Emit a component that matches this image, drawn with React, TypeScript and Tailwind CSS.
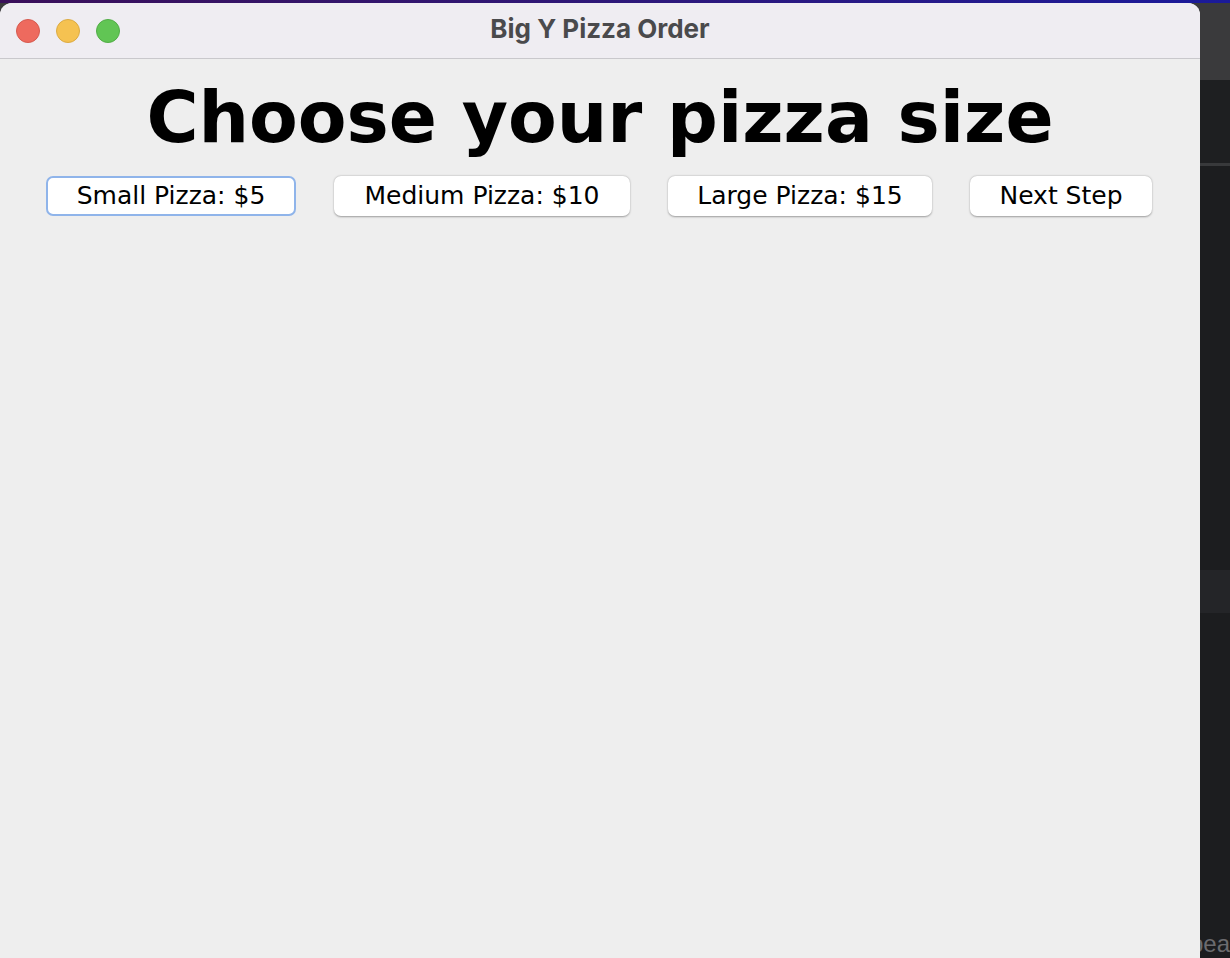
import React from "react";

export default function App() {
  return (
    <div className="relative w-[1230px] h-[958px] overflow-hidden bg-[#1c1d1f]" style={{ fontFamily: '"DejaVu Sans", sans-serif' }}>
      {/* background desktop strip */}
      <div className="absolute inset-0 flex flex-col">
        <div className="h-[3px] bg-gradient-to-r from-[#3a0f5a] to-[#1a1a9a]" />
        <div className="h-[77px] bg-[#3a3a3c]" />
        <div className="h-[83px] bg-[#1e1f21]" />
        <div className="h-[3px] bg-[#38393b]" />
        <div className="h-[404px] bg-[#1c1d1f]" />
        <div className="h-[43px] bg-[#242528]" />
        <div className="flex-1 bg-[#1c1d1f]" />
        <div className="absolute right-0 bottom-[-4px] text-[24px] text-[#6b6b6e]" style={{ fontFamily: '"Liberation Sans", sans-serif' }}>bea</div>
      </div>

      {/* window */}
      <div className="absolute left-0 top-[3px] w-[1200px] h-[955px] rounded-t-[12px] overflow-hidden bg-[#eeeeee] flex flex-col">
        <div className="relative h-[56px] bg-[#efedf2] border-b border-[#c9c8cc] flex items-center justify-center shrink-0">
          <div className="absolute left-[16px] top-[16px] flex gap-[16px]">
            <div className="w-[24px] h-[24px] rounded-full bg-[#ee6a5e] border border-[#d65a4f]" />
            <div className="w-[24px] h-[24px] rounded-full bg-[#f5c251] border border-[#dcab43]" />
            <div className="w-[24px] h-[24px] rounded-full bg-[#61c554] border border-[#52ad47]" />
          </div>
          <span className="text-[26px] font-bold text-[#4a4a4c] mt-[-4px]" style={{ fontFamily: 'Inter, "Liberation Sans", sans-serif' }}>Big Y Pizza Order</span>
        </div>
        <div className="flex flex-col items-center">
          <h1 className="text-[71px] font-bold text-black leading-none mt-[23px]" style={{ fontFamily: '"DejaVu Sans", Verdana, sans-serif' }}>Choose your pizza size</h1>
          <div className="flex gap-[38px] mt-[23px] -ml-[2px]">
            <button className="w-[250px] h-[40px] rounded-[7px] bg-white border-2 border-[#8fb4ea] text-[25px] text-black flex items-center justify-center">Small Pizza: $5</button>
            <button className="w-[296px] h-[40px] rounded-[7px] bg-white shadow-[0_0.5px_2px_rgba(0,0,0,0.35)] text-[25px] text-black flex items-center justify-center">Medium Pizza: $10</button>
            <button className="w-[264px] h-[40px] rounded-[7px] bg-white shadow-[0_0.5px_2px_rgba(0,0,0,0.35)] text-[25px] text-black flex items-center justify-center">Large Pizza: $15</button>
            <button className="w-[182px] h-[40px] rounded-[7px] bg-white shadow-[0_0.5px_2px_rgba(0,0,0,0.35)] text-[25px] text-black flex items-center justify-center">Next Step</button>
          </div>
        </div>
      </div>
    </div>
  );
}
